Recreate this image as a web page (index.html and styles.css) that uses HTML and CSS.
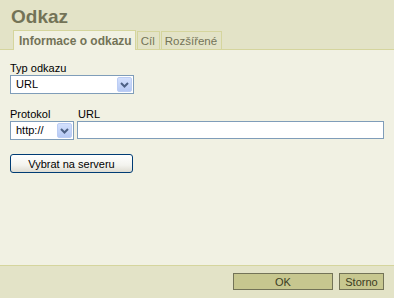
FILE: index.html
```html
<!DOCTYPE html>
<html>
<head>
<meta charset="utf-8">
<title>Odkaz</title>
<link rel="stylesheet" href="styles.css">
</head>
<body>
<div class="dialog">
  <div class="header">
    <div class="title">Odkaz</div>
    <div class="tabs">
      <div class="tab active">Informace o odkazu</div>
      <div class="tab">Cíl</div>
      <div class="tab">Rozšířené</div>
    </div>
  </div>
  <div class="content">
    <div class="field">
      <div class="label">Typ odkazu</div>
      <div class="select type-select">
        <span class="value">URL</span>
        <span class="arrow"><svg width="9" height="6" viewBox="0 0 9 6"><path d="M1 1 L4.5 4.5 L8 1" fill="none" stroke="#4d6185" stroke-width="2"/></svg></span>
      </div>
    </div>
    <div class="row">
      <div class="field">
        <div class="label">Protokol</div>
        <div class="select proto-select">
          <span class="value">http://</span>
          <span class="arrow"><svg width="9" height="6" viewBox="0 0 9 6"><path d="M1 1 L4.5 4.5 L8 1" fill="none" stroke="#4d6185" stroke-width="2"/></svg></span>
        </div>
      </div>
      <div class="field grow">
        <div class="label url-label">URL</div>
        <div class="input"></div>
      </div>
    </div>
    <button class="xp-btn">Vybrat na serveru</button>
  </div>
  <div class="footer">
    <button class="btn ok">OK</button>
    <button class="btn storno">Storno</button>
  </div>
</div>
</body>
</html>
```

FILE: styles.css
```css
html, body {
  margin: 0;
  padding: 0;
}
body {
  background: #f1f1e3;
  font-family: "Liberation Sans", Arial, sans-serif;
  font-size: 11px;
  color: #000;
}
.dialog {
  display: flex;
  flex-direction: column;
  height: 298px;
}
.header {
  background: #e3e3c7;
}
.title {
  font-size: 19px;
  font-weight: bold;
  color: #737357;
  line-height: 22px;
  padding: 6px 11px 0;
}
.tabs {
  display: flex;
  align-items: flex-end;
  gap: 1px;
  padding: 2px 0 0 13px;
  border-bottom: 1px solid #d5d59d;
}
.tab {
  font-size: 11.5px;
  line-height: 14px;
  color: #737357;
  background: #e3e3c7;
  border: 1px solid #d5d59d;
  border-bottom: none;
  padding: 2px 4px 1px 3px;
}
.tab.active {
  font-size: 12px;
  font-weight: bold;
  background: #f1f1e3;
  padding: 3px 3px 2px 5px;
  margin-bottom: -1px;
}
.content {
  flex: 1;
  padding: 12px 10px 0;
}
.label {
  line-height: 13px;
}
.select {
  display: flex;
  box-sizing: border-box;
  height: 19px;
  border: 1px solid #7f9db9;
  background: #fff;
}
.type-select {
  width: 124px;
}
.proto-select {
  width: 64px;
}
.value {
  flex: 1;
  padding-left: 5px;
  line-height: 17px;
}
.arrow {
  box-sizing: border-box;
  width: 15px;
  margin: 1px;
  border: 1px solid #bccdf4;
  border-radius: 2px;
  background: linear-gradient(#d3e0fd, #b6c9f4);
  display: flex;
  align-items: center;
  justify-content: center;
}
.row {
  display: flex;
  gap: 3px;
  margin-top: 14px;
}
.grow {
  flex: 1;
}
.url-label {
  padding-left: 1px;
}
.input {
  box-sizing: border-box;
  height: 18px;
  border: 1px solid #7f9db9;
  background: #fff;
}
.xp-btn {
  display: block;
  margin-top: 14px;
  box-sizing: border-box;
  width: 123px;
  height: 19px;
  padding: 0;
  font-family: "Liberation Sans", Arial, sans-serif;
  font-size: 11px;
  color: #000;
  border: 1px solid #003c74;
  border-radius: 3px;
  background: linear-gradient(#ffffff, #f3f3ee 60%, #dedcd2);
}
.footer {
  display: flex;
  justify-content: flex-end;
  gap: 6px;
  border-top: 1px solid #d5d59d;
  background: #e3e3c7;
  padding: 7px 10px 8px;
}
.btn {
  box-sizing: border-box;
  height: 17px;
  padding: 0;
  font-family: "Liberation Sans", Arial, sans-serif;
  font-size: 11px;
  color: #3b3b1f;
  background: #c7c78f;
  border: 1px solid #737357;
}
.ok {
  width: 100px;
}
.storno {
  width: 45px;
}
```
